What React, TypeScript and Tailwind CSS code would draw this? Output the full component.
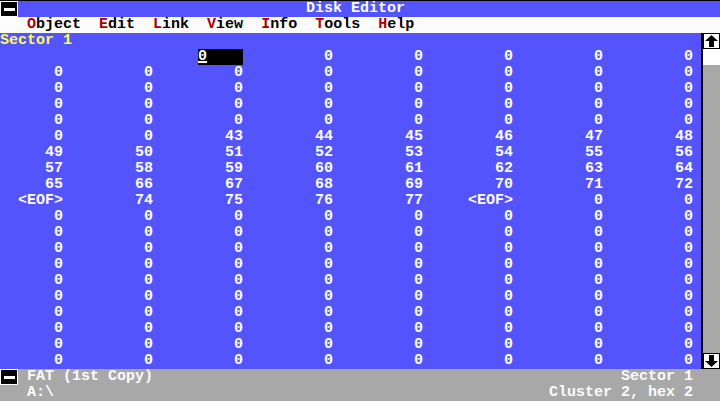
import React from "react";

const blue = "bg-[#5454fc]";

const zeros = ["0", "0", "0", "0", "0", "0", "0", "0"];

// one entry per data row, "CUR" marks the cursor cell
const rows: (string | null)[][] = [
  [null, null, "CUR", "0", "0", "0", "0", "0"],
  zeros,
  zeros,
  zeros,
  zeros,
  ["0", "0", "43", "44", "45", "46", "47", "48"],
  ["49", "50", "51", "52", "53", "54", "55", "56"],
  ["57", "58", "59", "60", "61", "62", "63", "64"],
  ["65", "66", "67", "68", "69", "70", "71", "72"],
  ["<EOF>", "74", "75", "76", "77", "<EOF>", "0", "0"],
  zeros,
  zeros,
  zeros,
  zeros,
  zeros,
  zeros,
  zeros,
  zeros,
  zeros,
  zeros,
];

const menu = ["Object", "Edit", "Link", "View", "Info", "Tools", "Help"];

const CloseBox = () => (
  <div className="w-[18px] h-4 bg-black border border-white flex items-center justify-center">
    <div className="w-[11px] h-[3px] bg-white" />
  </div>
);

const Arrow = ({ down }: { down?: boolean }) => (
  <div className="h-4 bg-white border border-black flex items-center justify-center">
    <svg width="15" height="14" viewBox="0 0 15 14" className={down ? "rotate-180" : ""}>
      <polygon points="7.5,1 14,7 10,7 10,13 5,13 5,7 1,7" fill="black" />
    </svg>
  </div>
);

export default function App() {
  return (
    <div
      className="w-[720px] h-[401px] bg-black overflow-hidden text-[15px] leading-4 font-bold text-[#fcfcfc]"
      style={{ fontFamily: '"Liberation Mono", "DejaVu Sans Mono", monospace' }}
    >
      {/* Title */}
      <div className={`mt-px h-4 flex ${blue}`}>
        <CloseBox />
        <div className="pl-[288px] whitespace-pre">Disk Editor</div>
      </div>

      {/* Menu */}
      <div className="h-4 bg-[#fcfcfc] text-black flex gap-[18px] pl-[27px] whitespace-pre">
        {menu.map((m) => (
          <span key={m}>
            <span className="text-[#a80000]">{m[0]}</span>
            {m.slice(1)}
          </span>
        ))}
      </div>

      {/* Body */}
      <div className={`flex ${blue}`}>
        <div className="w-[701px]">
          <div className="h-4 text-[#fcfc54]">Sector 1</div>
          {rows.map((r, i) => (
            <div key={i} className="h-4 grid grid-cols-[repeat(7,90px)_71px]">
              {r.map((c, j) => (
                <div
                  key={j}
                  className={`flex justify-end whitespace-pre ${j === 7 ? "pr-[8px]" : "pr-[27px]"}`}
                >
                  {c === "CUR" ? (
                    <span className="w-[45px] h-4 bg-black text-left">
                      <span className="underline decoration-2 underline-offset-[1px]">0</span>
                    </span>
                  ) : (
                    c
                  )}
                </div>
              ))}
            </div>
          ))}
        </div>

        {/* Scrollbar */}
        <div className="w-[19px] border-l-2 border-black flex flex-col">
          <Arrow />
          <div className="h-4 bg-white" />
          <div className="flex-1 bg-[#a8a8a8]" />
          <Arrow down />
        </div>
      </div>

      {/* Status */}
      <div className="bg-[#a8a8a8] h-8">
        <div className="h-4 flex">
          <CloseBox />
          <span className="pl-[9px] whitespace-pre">FAT (1st Copy)</span>
          <span className="ml-auto pr-[27px]">Sector 1</span>
        </div>
        <div className="h-4 flex">
          <span className="pl-[27px] whitespace-pre">A:\</span>
          <span className="ml-auto pr-[27px] whitespace-pre">Cluster 2, hex 2</span>
        </div>
      </div>
    </div>
  );
}
